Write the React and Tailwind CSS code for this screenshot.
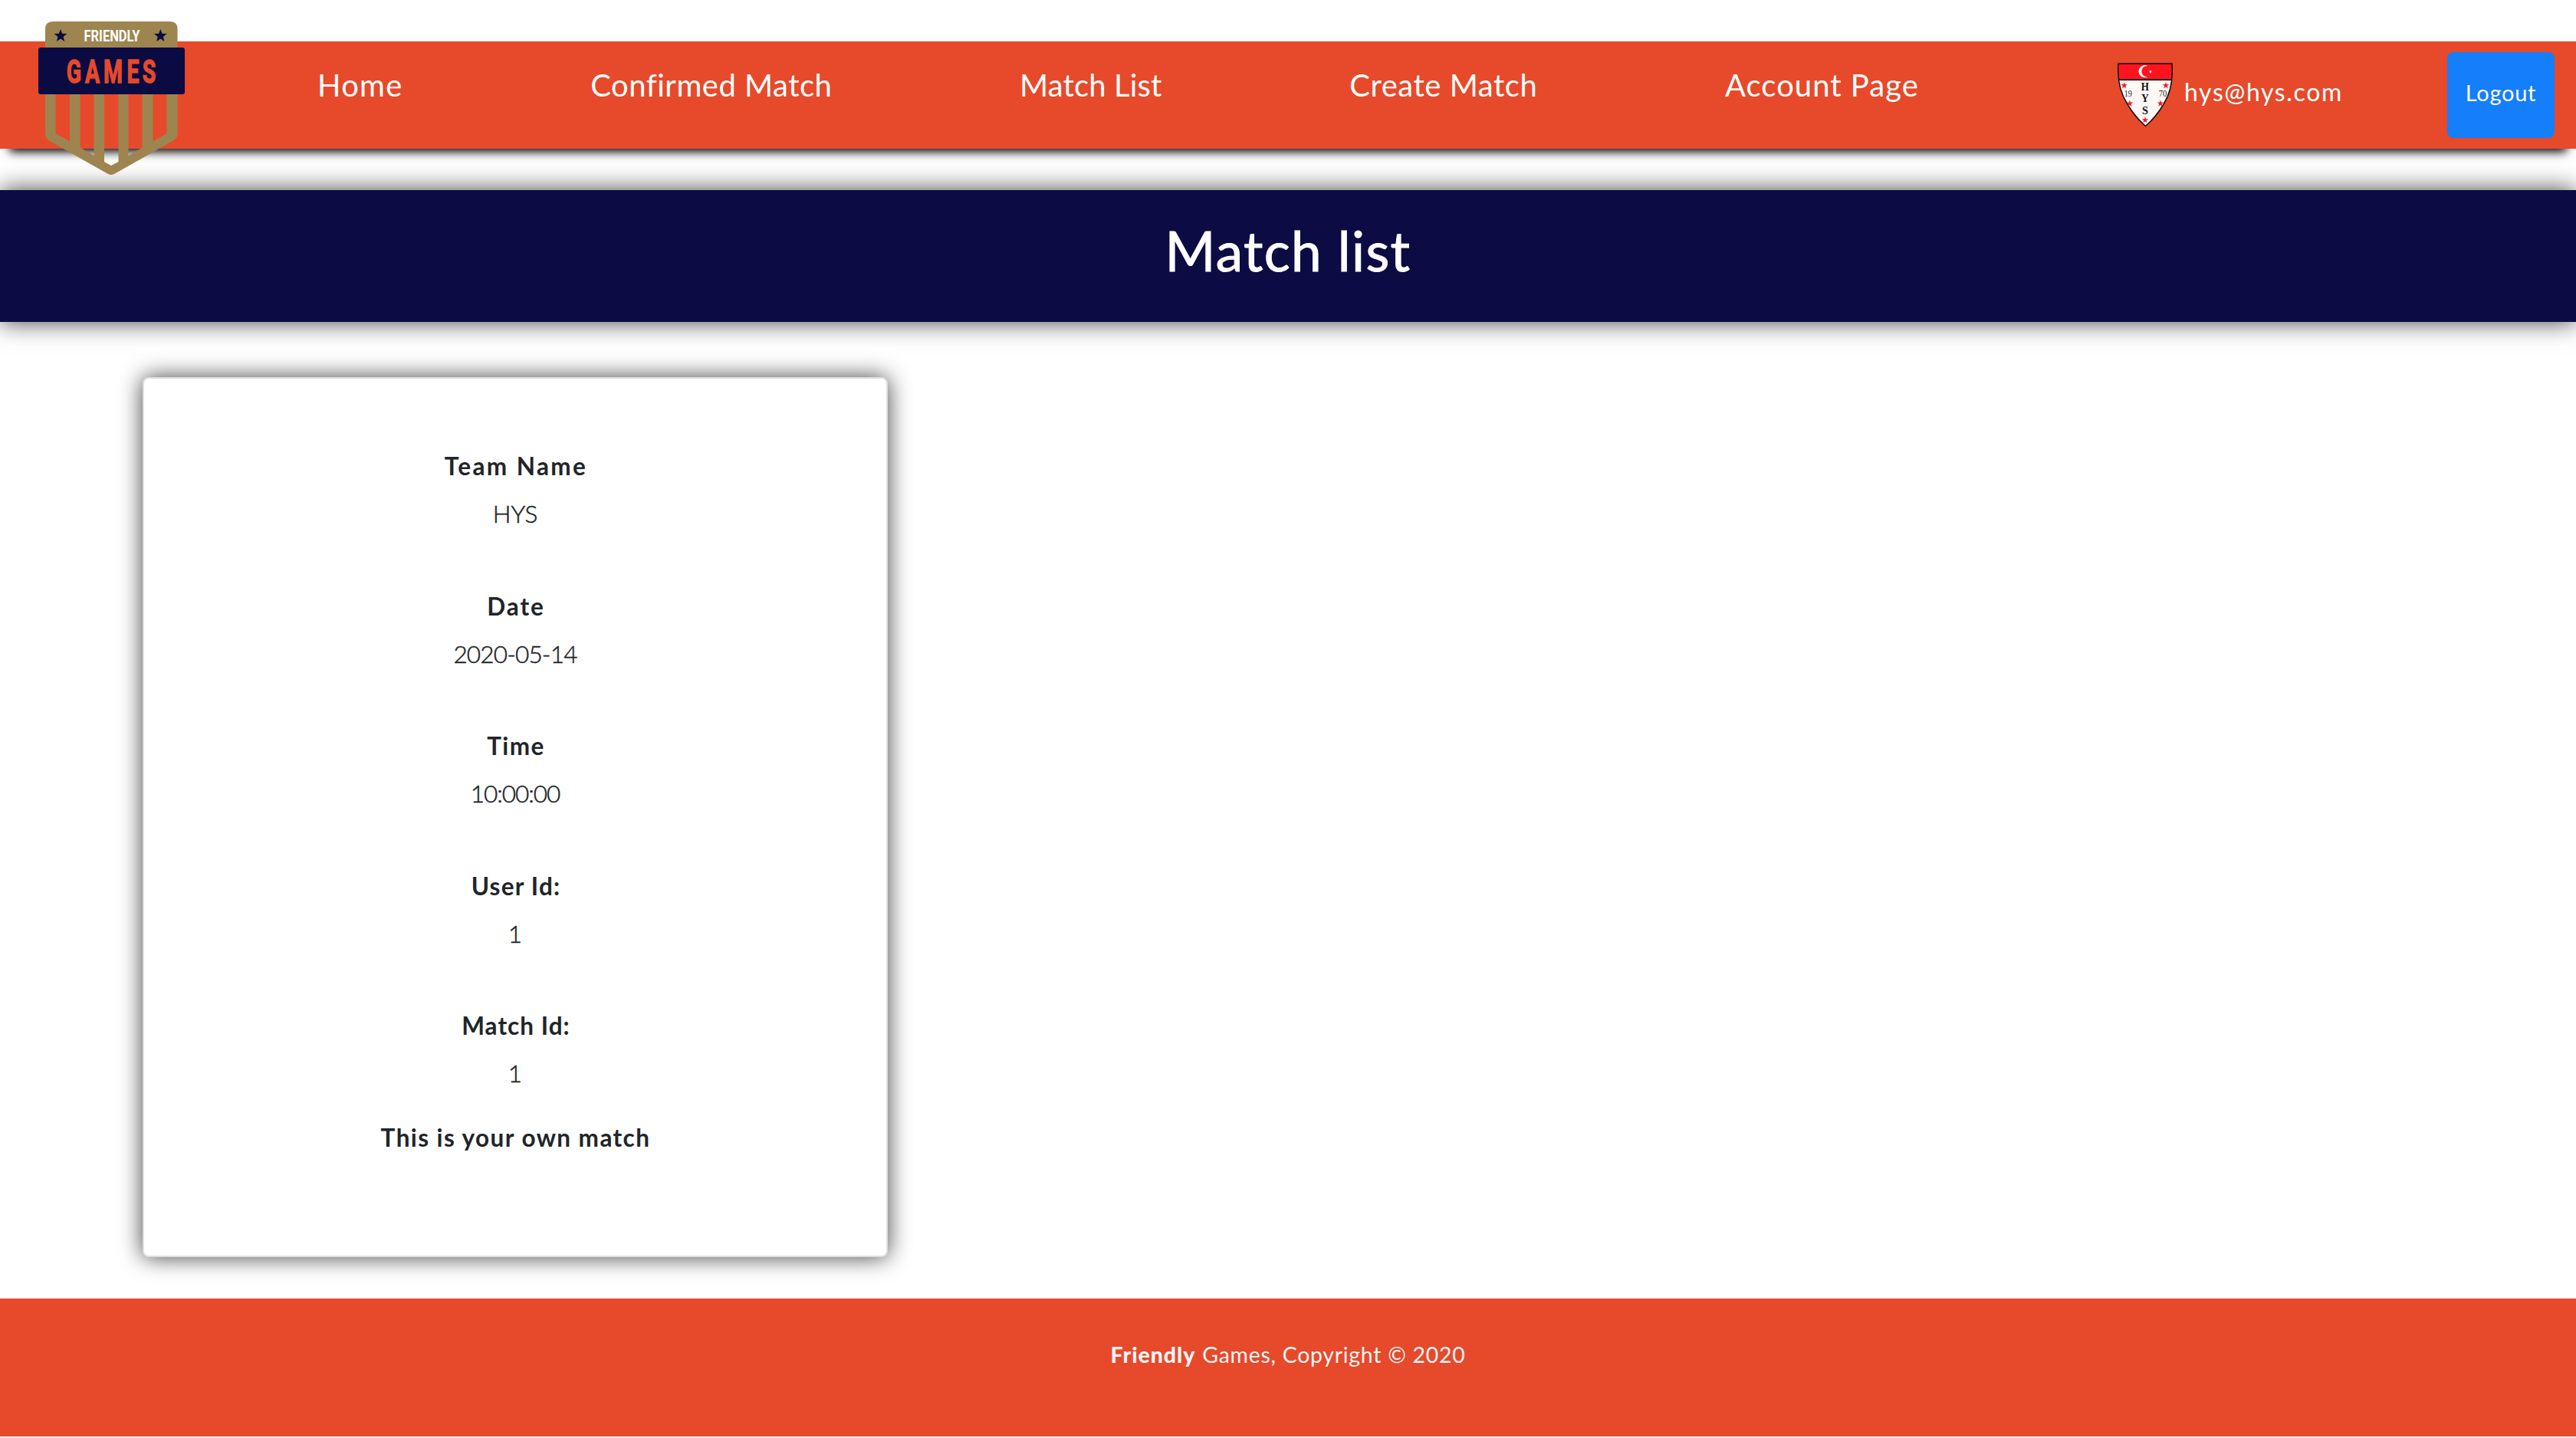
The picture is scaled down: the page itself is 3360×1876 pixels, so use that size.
import React from "react";

const NAV = [
  { label: "Home", spacing: "tracking-[1.23px]" },
  { label: "Confirmed Match", spacing: "tracking-[0.5px]" },
  { label: "Match List", spacing: "tracking-[0.16px]" },
  { label: "Create Match", spacing: "tracking-[0.55px]" },
  { label: "Account Page", spacing: "tracking-[1.02px]" },
];

const FIELDS = [
  { label: "Team Name", ls: "tracking-[2.4px]", value: "HYS", vs: "tracking-[-0.14px]" },
  { label: "Date", ls: "tracking-[1.93px]", value: "2020-05-14", vs: "tracking-[-0.83px]" },
  { label: "Time", ls: "tracking-[1.42px]", value: "10:00:00", vs: "tracking-[-1.02px]" },
  { label: "User Id:", ls: "tracking-[1.21px]", value: "1", vs: "tracking-normal" },
  { label: "Match Id:", ls: "tracking-[1.04px]", value: "1", vs: "tracking-normal" },
];

function Star({ cx, cy, r, fill }) {
  const points = Array.from({ length: 10 }, (_, i) => {
    const radius = i % 2 ? r * 0.42 : r;
    const a = (Math.PI / 5) * i - Math.PI / 2;
    return `${(cx + radius * Math.cos(a)).toFixed(2)},${(cy + radius * Math.sin(a)).toFixed(2)}`;
  }).join(" ");
  return <polygon points={points} fill={fill} />;
}

function Logo() {
  return (
    <svg viewBox="49 27 193 203" className="block h-[203px] w-[193px]" aria-label="Friendly Games">
      <path
        fillRule="evenodd"
        fill="#9e854f"
        d="M69 28 H222 Q231.500 28 231.500 38 V174 Q231.500 180 226 183.500 L149 227 Q145 229 141 227 L64 183.500 Q59 180 59 174 V38 Q59 28 69 28 Z
           M72.500 100 V174 L91 184.500 V100 Z
           M104.500 100 V192.500 L122.500 203 V100 Z
           M136 100 V211 L145 216 L154.500 211 V100 Z
           M167.500 100 V203 L185.500 192.500 V100 Z
           M199.500 100 V184.500 L217.500 174 V100 Z"
      />
      <rect x="50" y="62" width="191" height="61" rx="3" fill="#0a0b42" />
      <Star cx={79} cy={46.8} r={8.8} fill="#0a0b42" />
      <Star cx={209.300} cy={46.8} r={8.8} fill="#0a0b42" />
      <text x="109.500" y="54.300" textLength="73" lengthAdjust="spacingAndGlyphs" fill="#fff" className="font-['Roboto'] text-[19.5px] font-bold">
        FRIENDLY
      </text>
      <text
        transform="scale(0.66 1)"
        x="146.2 182.6 223.2 262.9 294.7"
        y="107.700"
        textAnchor="middle"
        fill="#e64a2b"
        stroke="#e64a2b"
        strokeWidth="1.4"
        className="font-['Roboto'] text-[43px] font-bold"
      >
        GAMES
      </text>
    </svg>
  );
}

function Crest() {
  const shield = "M1 1 H71 C72.500 22 69 40 60 54 C53 66 44 76 36.500 82.500 C29 76 20 66 13 54 C4 40 -0.500 22 1 1 Z";
  return (
    <svg viewBox="0 0 72 84" className="block h-[84px] w-[72px]" aria-label="HYS crest">
      <defs>
        <clipPath id="crest-shape">
          <path d={shield} />
        </clipPath>
      </defs>
      <g clipPath="url(#crest-shape)">
        <rect width="72" height="84" fill="#fff8f6" />
        <rect width="72" height="22" fill="#ff131f" />
        <rect y="21" width="72" height="2" fill="#1b1010" />
      </g>
      <path d={shield} fill="none" stroke="#160d0d" strokeWidth="1.500" />
      <path d="M39.500 4.200 A8 8 0 1 0 39.500 18 A7 7 0 1 1 39.500 4.200 Z" fill="#fff8f6" />
      <Star cx={43} cy={11.500} r={2.3} fill="#fff8f6" />
      <Star cx={8.700} cy={29.5} r={4.5} fill="#ee2030" />
      <Star cx={63} cy={29.5} r={4.5} fill="#ee2030" />
      <Star cx={16} cy={53} r={4.5} fill="#ee2030" />
      <Star cx={56} cy={53} r={4.5} fill="#ee2030" />
      <Star cx={36} cy={74.7} r={4.5} fill="#ee2030" />
      <g fill="#222" className="font-['Liberation_Serif'] text-[12px]">
        <text x="8.700" y="44.300" textLength="10.300" lengthAdjust="spacingAndGlyphs">19</text>
        <text x="53.700" y="44.300" textLength="10.600" lengthAdjust="spacingAndGlyphs">70</text>
      </g>
      <g fill="#111" className="font-['Liberation_Serif'] text-[15.5px] font-bold">
        <text x="30.800" y="35.500" textLength="10.200" lengthAdjust="spacingAndGlyphs">H</text>
        <text x="31" y="51" textLength="9.800" lengthAdjust="spacingAndGlyphs">Y</text>
        <text x="32" y="67" textLength="8" lengthAdjust="spacingAndGlyphs">S</text>
      </g>
    </svg>
  );
}

function Header() {
  return (
    <header className="relative z-10 flex h-[140px] items-start bg-[#e64a2b] text-white shadow-[0_16px_12px_-12px_#000]">
      <div className="-mt-[27px] ml-[49px] w-[193px] shrink-0">
        <Logo />
      </div>
      <nav className="ml-[172px] flex gap-[244.7px] text-[40px] leading-[115px] whitespace-nowrap">
        {NAV.map((n) => (
          <a key={n.label} className={n.spacing}>
            {n.label}
          </a>
        ))}
      </nav>
      <div className="ml-auto flex items-start">
        <div className="mt-[28px]">
          <Crest />
        </div>
        <span className="ml-[15px] w-[343px] text-[32px] leading-[131px] tracking-[1.65px]">hys@hys.com</span>
        <button className="mt-[14px] mr-[28px] h-[112px] w-[140px] rounded-[8px] bg-[#157efb] pb-[6px] text-[29px] leading-[106px] tracking-[0.73px]">
          Logout
        </button>
      </div>
    </header>
  );
}

function MatchCard() {
  return (
    <article className="h-[1148px] w-[972px] rounded-[8px] border-2 border-[#dfdfdf] bg-white pt-[83px] text-center text-[31.5px] leading-[62px] text-[#212529] shadow-[0_0_30px_rgba(0,0,0,0.75)]">
      <dl className="flex flex-col gap-[58.6px]">
        {FIELDS.map((f) => (
          <div key={f.label}>
            <dt className={`pl-[2px] font-bold ${f.ls}`}>{f.label}</dt>
            <dd className={`font-light [-webkit-text-stroke:0.5px_#212529] ${f.vs}`}>{f.value}</dd>
          </div>
        ))}
      </dl>
      <p className="mt-[22px] pl-[1px] font-bold tracking-[1.42px]">This is your own match</p>
    </article>
  );
}

export default function App() {
  return (
    <div className="h-[1876px] w-[3360px] overflow-hidden bg-white pt-[54px] font-['Lato',sans-serif]">
      <Header />
      <section className="mt-[54px] h-[172px] bg-[#0d0b43] text-center text-white shadow-[0_0_30px_rgba(0,0,0,0.75)]">
        <h1 className="text-[71px] leading-[157px] tracking-[1.42px] [-webkit-text-stroke:1px_white]">Match list</h1>
      </section>
      <main className="mt-[72px] pl-[186px]">
        <MatchCard />
      </main>
      <footer className="mt-[54px] flex h-[180px] justify-center gap-[9px] bg-[#e64a2b] text-[28.5px] leading-[146px] text-[#f4f4f4]">
        <b className="font-black tracking-[0.94px]">Friendly</b>
        <span className="tracking-[0.7px]">Games, Copyright © 2020</span>
      </footer>
    </div>
  );
}
